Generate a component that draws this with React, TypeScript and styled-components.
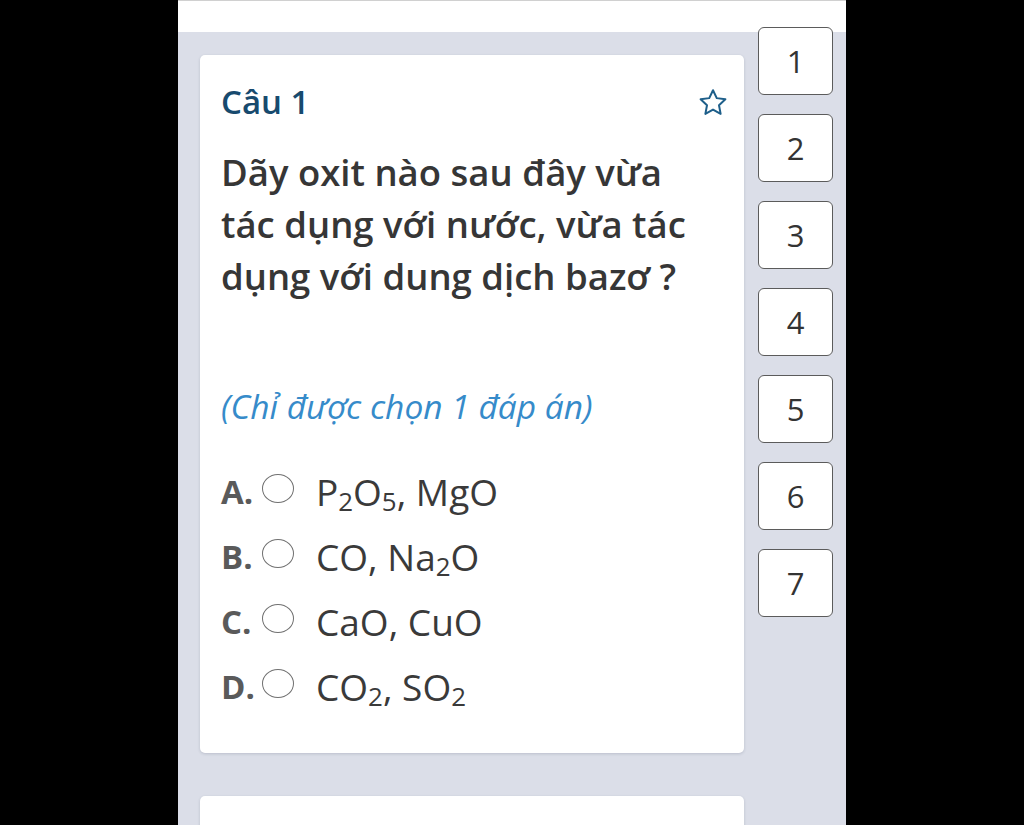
import React, { FC } from "react";
import styled, { createGlobalStyle } from "styled-components";

const GlobalStyle = createGlobalStyle`
  html, body {
    margin: 0;
    padding: 0;
    background: #000;
  }
  body {
    font-family: "Open Sans", "Liberation Sans", sans-serif;
  }
`;

const Screen = styled.div`
  display: flex;
  justify-content: center;
  width: 1024px;
  height: 825px;
  overflow: hidden;
  background: #000;
`;

const Column = styled.div`
  display: flex;
  flex-direction: column;
  width: 668px;
  height: 825px;
  background: #dbdee8;
  overflow: hidden;
`;

const TopBar = styled.div`
  height: 31px;
  flex-shrink: 0;
  background: #fff;
  border-top: 1px solid #d0d0d0;
`;

const Main = styled.div`
  display: flex;
  align-items: flex-start;
  gap: 14px;
  padding: 0 13px 0 22px;
`;

const CardList = styled.div`
  flex: 1;
  display: flex;
  flex-direction: column;
  gap: 43px;
  padding-top: 23px;
`;

const Card = styled.div`
  background: #fff;
  border-radius: 5px;
  box-shadow: 0 1px 3px rgba(40, 50, 80, 0.18);
  padding: 24px 16px 34px 21px;
  box-sizing: border-box;
  min-height: 120px;
`;

const CardHeader = styled.div`
  display: flex;
  align-items: center;
  justify-content: space-between;
  height: 44px;
`;

const QuestionTitle = styled.div`
  font-size: 33px;
  font-weight: 600;
  color: #174a6e;
`;

const StarButton = styled.div`
  display: flex;
  width: 30px;
  height: 30px;
  margin-top: 4px;
`;

const QuestionText = styled.div`
  margin-top: 23px;
  font-size: 36.5px;
  line-height: 52px;
  font-weight: 600;
  color: #363636;
  padding-right: 20px;
`;

const Hint = styled.div`
  margin-top: 82px;
  font-size: 33.5px;
  line-height: 44px;
  font-style: italic;
  color: #368bca;
`;

const Options = styled.div`
  margin-top: 31px;
  display: flex;
  flex-direction: column;
`;

const OptionRow = styled.div`
  display: flex;
  align-items: center;
  height: 65px;
`;

const OptionLabel = styled.span`
  width: 41px;
  flex-shrink: 0;
  font-size: 33px;
  font-weight: 700;
  color: #5a5a5a;
  line-height: 65px;
`;

const Radio = styled.span`
  display: block;
  flex-shrink: 0;
  width: 32px;
  height: 29px;
  border: 1.5px solid #707070;
  border-radius: 50%;
  box-sizing: border-box;
  margin-top: -6px;
`;

const OptionText = styled.span`
  margin-left: 22px;
  font-size: 37px;
  color: #3a3a3a;
  line-height: 65px;

  sub {
    font-size: 0.7em;
    vertical-align: -0.2em;
    line-height: 0;
  }
`;

const Nav = styled.div`
  position: relative;
  z-index: 1;
  margin-top: -5px;
  width: 75px;
  display: flex;
  flex-direction: column;
  gap: 19px;
`;

const NavButton = styled.div`
  height: 68px;
  box-sizing: border-box;
  border: 1.5px solid #5b5b5b;
  border-radius: 6px;
  background: #fff;
  display: flex;
  align-items: center;
  justify-content: center;
  font-size: 31px;
  color: #333;
`;

const Star: FC = () => (
  <svg width="30" height="30" viewBox="0 0 24 24" fill="none">
    <path
      d="M12 1.8l3 6.3 6.9.9-5.1 4.8 1.3 6.9L12 17.3l-6.1 3.4 1.3-6.9L2.1 9l6.9-.9z"
      stroke="#1e5f8a"
      strokeWidth="1.6"
      strokeLinejoin="round"
    />
  </svg>
);

interface Option {
  label: string;
  content: React.ReactNode;
}

const options: Option[] = [
  {
    label: "A.",
    content: (
      <>
        P<sub>2</sub>O<sub>5</sub>, MgO
      </>
    ),
  },
  {
    label: "B.",
    content: (
      <>
        CO, Na<sub>2</sub>O
      </>
    ),
  },
  { label: "C.", content: <>CaO, CuO</> },
  {
    label: "D.",
    content: (
      <>
        CO<sub>2</sub>, SO<sub>2</sub>
      </>
    ),
  },
];

const App: FC = () => (
  <>
    <GlobalStyle />
    <Screen>
      <Column>
        <TopBar />
        <Main>
          <CardList>
            <Card>
              <CardHeader>
                <QuestionTitle>Câu 1</QuestionTitle>
                <StarButton>
                  <Star />
                </StarButton>
              </CardHeader>
              <QuestionText>
                Dãy oxit nào sau đây vừa tác dụng với nước, vừa tác dụng với
                dung dịch bazơ ?
              </QuestionText>
              <Hint>(Chỉ được chọn 1 đáp án)</Hint>
              <Options>
                {options.map((o) => (
                  <OptionRow key={o.label}>
                    <OptionLabel>{o.label}</OptionLabel>
                    <Radio />
                    <OptionText>{o.content}</OptionText>
                  </OptionRow>
                ))}
              </Options>
            </Card>
            <Card />
          </CardList>
          <Nav>
            {[1, 2, 3, 4, 5, 6, 7].map((n) => (
              <NavButton key={n}>{n}</NavButton>
            ))}
          </Nav>
        </Main>
      </Column>
    </Screen>
  </>
);

export default App;
